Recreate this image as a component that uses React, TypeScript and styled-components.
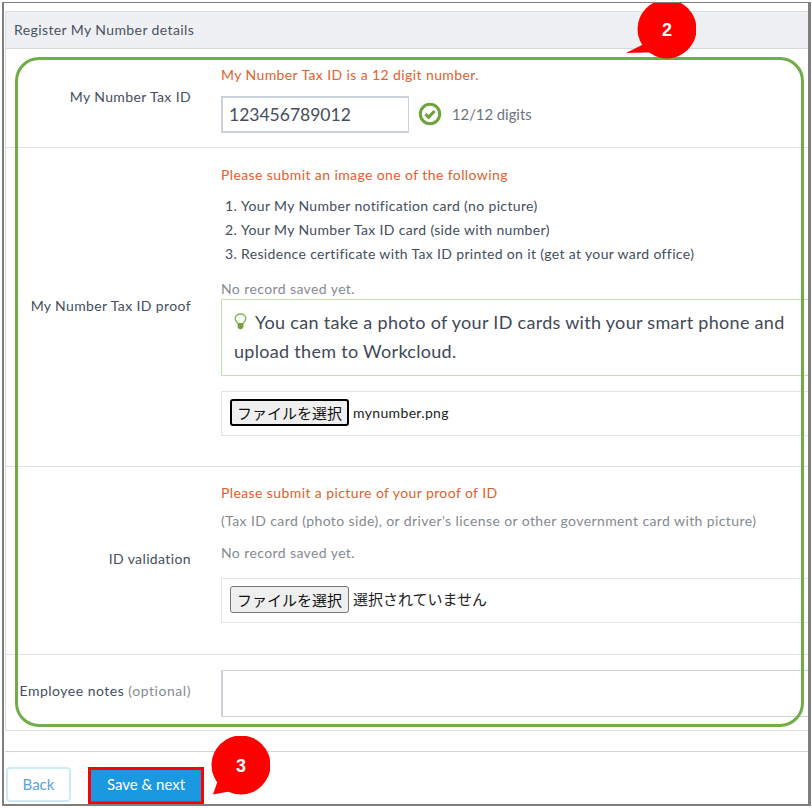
import React from "react";
import styled, { createGlobalStyle } from "styled-components";

const Global = createGlobalStyle`
  html, body { margin: 0; padding: 0; background: #fff; }
  body { font-family: Lato, "Noto Sans CJK JP", sans-serif; color: #414b5a; }
  * { box-sizing: border-box; }
`;
const Page = styled.div`
  width: 812px; height: 808px; padding: 2px 1px 2px 2px; background: #fff;
`;
const Frame = styled.div`
  position: relative; width: 100%; height: 100%; overflow: hidden;
  border: solid #7f7f7f; border-width: 1.5px 3px 2px 2px; padding: 7.5px 0 0 1px; background: #fff;
`;
const Panel = styled.section`
  width: 840px; border: 1px solid #dcdfe3; border-right: 0;
`;
const PanelHeader = styled.header`
  height: 37px; background: #eef0f3; border-bottom: 1px solid #d6d9dd;
  padding: 0 0 0 8px; display: flex; align-items: center; font-size: 14px; letter-spacing: 0.4px; color: #4a5361;
`;
const Row = styled.div<{ $last?: boolean }>`
  display: grid; grid-template-columns: 185px 1fr; column-gap: 30px; align-items: center;
  border-bottom: ${(p) => (p.$last ? "0" : "1px solid #dfe2e5")};
`;
const Label = styled.div`
  text-align: right; font-size: 14px; line-height: 20px; padding-bottom: 2px; color: #444e5c; letter-spacing: 0.38px; white-space: nowrap;
`;
const Optional = styled.span`color: #858b94; letter-spacing: 0.55px;`;
const NotesLabel = styled(Label)`letter-spacing: 0.5px;`;
const Field = styled.div<{ $top: number; $bottom: number }>`
  padding: ${(p) => p.$top}px 0 ${(p) => p.$bottom}px 0; width: 600px;
`;
const Hint = styled.div`
  font-size: 14px; line-height: 20px; color: #e2602c; letter-spacing: 0.4px;
`;
const Muted = styled.div<{ $gap: number }>`
  font-size: 14px; line-height: 20px; color: #858a90; letter-spacing: 0.4px; margin-top: ${(p) => p.$gap}px; white-space: nowrap;
`;
const InputLine = styled.div`
  display: flex; align-items: center; margin-top: 11px;
`;
const TaxInput = styled.div`
  width: 188px; height: 37px; border: 2px solid #ccd2da; border-width: 2px 1px 2px 2px; padding-left: 6px;
  display: flex; align-items: center; font-size: 17.5px; color: #444e5c; background: #fff;
`;
const CheckWrap = styled.span`display: inline-flex; margin-left: 9px;`;
const Digits = styled.span`font-size: 14.8px; color: #6c7480; margin-left: 10px;`;
const Steps = styled.ol`
  margin: 9px 0 0; padding: 0 0 0 20px; font-size: 14px; line-height: 24px; color: #444e5c; letter-spacing: 0.35px;
`;
const Tip = styled.div`
  height: 77px; border: 1px solid #c5e2a8; padding: 8px 12px; font-size: 18px; line-height: 29px; color: #3f4957; background: #fff; letter-spacing: 0.3px;
`;
const TipIcon = styled.span`display: inline-flex; vertical-align: -1px; margin-right: 8px;`;
const FileBox = styled.div<{ $gap: number }>`
  height: 45px; margin-top: ${(p) => p.$gap}px; border: 1px solid #e2e4e7; padding: 0 0 2px 8px; display: flex; align-items: center;
`;
const FileButton = styled.button<{ $focus?: boolean }>`
  width: 119px; height: 27px; padding: 0; margin-right: 4px; background: #efefef; color: #111;
  font-family: "Noto Sans CJK JP", sans-serif; font-size: 15px; line-height: 1; border-radius: 3px;
  border: ${(p) => (p.$focus ? "2px solid #000" : "1px solid #767676")};
`;
const FileName = styled.span<{ $jp?: boolean }>`
  font-size: ${(p) => (p.$jp ? "15px" : "14px")}; color: #222; letter-spacing: ${(p) => (p.$jp ? "0" : "0.35px")};
  padding-bottom: ${(p) => (p.$jp ? "2px" : "0")};
  font-family: ${(p) => (p.$jp ? '"Noto Sans CJK JP", sans-serif' : "Lato, sans-serif")};
`;
const Notes = styled.div`
  height: 47px; width: 600px; border: 2px solid #ccd2da; border-width: 1px 1px 1px 2px; margin: 15px 0 13px;
`;
const Footer = styled.footer`
  margin-top: 20px; border-top: 1px solid #d3d5d8; padding: 15px 0 0 1px; display: flex; align-items: flex-start;
`;
const BackButton = styled.button`
  width: 65px; height: 35px; border: 2px solid #cdeaf8; border-radius: 4px; background: #fff; color: #5aa3dc;
  font-family: Lato, sans-serif; font-size: 15px;
`;
const SaveOutline = styled.div`
  margin-left: 17px; border: 3px solid #f00; height: 38px;
`;
const SaveButton = styled.button`
  width: 110px; height: 32px; padding: 0 0 2px; border: 0; border-bottom: 1px solid #127cb8; background: #1a98e0; color: #fff;
  font-family: Lato, sans-serif; font-size: 15px; display: block;
`;
const GreenOutline = styled.div`
  position: absolute; left: 11px; top: 54px; width: 789px; height: 670px;
  border: 3px solid #70ad47; border-radius: 24px; pointer-events: none;
`;
const Callout = styled.div<{ $x: number; $y: number }>`
  position: absolute; left: ${(p) => p.$x}px; top: ${(p) => p.$y}px; width: 72px; height: 72px;
`;
const CalloutText = styled.span`
  position: absolute; left: 33px; top: 20px; color: #fff; font-family: "Liberation Sans", Arial, sans-serif; font-weight: 700; font-size: 18px;
  line-height: 20px; width: 20px; text-align: center;
`;

const Bubble = ({ tail }: { tail: string }) => (
  <svg width="72" height="72" viewBox="0 0 72 72">
    <circle cx="43" cy="29" r="29.5" fill="#f00" />
    <path d={tail} fill="#f00" />
  </svg>
);

const Check = () => (
  <svg width="24" height="24" viewBox="0 0 24 24">
    <circle cx="12" cy="12" r="9.7" fill="#fff" stroke="#70a33f" strokeWidth="3" />
    <path d="M7.4 12.2 L10.6 15.2 L16.6 9" fill="none" stroke="#70a33f" strokeWidth="3.2" />
  </svg>
);

const Bulb = () => (
  <svg width="13" height="17" viewBox="0 0 13 17">
    <path d="M3.8 10.2 C2.4 8.9 1.2 7.6 1.2 5.6 C1.2 2.9 3.6 1 6.5 1 C9.4 1 11.8 2.9 11.8 5.6 C11.8 7.6 10.6 8.9 9.2 10.2" fill="#fff" stroke="#7fb54d" strokeWidth="1.4" />
    <path d="M3.6 10 H9.4 V14 C9.4 15.4 8 16.2 6.5 16.2 C5 16.2 3.6 15.4 3.6 14 Z" fill="#70a33f" />
  </svg>
);

export default function App() {
  return (
    <Page>
      <Global />
      <Frame>
        <Panel>
          <PanelHeader>Register My Number details</PanelHeader>
          <Row>
            <Label>My Number Tax ID</Label>
            <Field $top={16} $bottom={14}>
              <Hint>My Number Tax ID is a 12 digit number.</Hint>
              <InputLine>
                <TaxInput>123456789012</TaxInput>
                <CheckWrap><Check /></CheckWrap>
                <Digits>12/12 digits</Digits>
              </InputLine>
            </Field>
          </Row>
          <Row>
            <Label>My Number Tax ID proof</Label>
            <Field $top={17} $bottom={30}>
              <Hint>Please submit an image one of the following</Hint>
              <Steps>
                <li>Your My Number notification card (no picture)</li>
                <li>Your My Number Tax ID card (side with number)</li>
                <li>Residence certificate with Tax ID printed on it (get at your ward office)</li>
              </Steps>
              <Muted $gap={13}>No record saved yet.</Muted>
              <Tip>
                <TipIcon><Bulb /></TipIcon>
                You can take a photo of your ID cards with your smart phone and upload them to Workcloud.
              </Tip>
              <FileBox $gap={15}>
                <FileButton $focus>ファイルを選択</FileButton>
                <FileName>mynumber.png</FileName>
              </FileBox>
            </Field>
          </Row>
          <Row>
            <Label>ID validation</Label>
            <Field $top={16} $bottom={31}>
              <Hint>Please submit a picture of your proof of ID</Hint>
              <Muted $gap={8}>(Tax ID card (photo side), or driver's license or other government card with picture)</Muted>
              <Muted $gap={12}>No record saved yet.</Muted>
              <FileBox $gap={15}>
                <FileButton>ファイルを選択</FileButton>
                <FileName $jp>選択されていません</FileName>
              </FileBox>
            </Field>
          </Row>
          <Row $last>
            <NotesLabel>Employee notes <Optional>(optional)</Optional></NotesLabel>
            <Notes />
          </Row>
        </Panel>
        <Footer>
          <BackButton>Back</BackButton>
          <SaveOutline><SaveButton>Save &amp; next</SaveButton></SaveOutline>
        </Footer>
        <GreenOutline />
        <Callout $x={620} $y={-3}>
          <Bubble tail="M2 53 L28 40 L40 52 Z" />
          <CalloutText>2</CalloutText>
        </Callout>
        <Callout $x={194} $y={733}>
          <Bubble tail="M15 58.5 L20 44 L34 55 Z" />
          <CalloutText>3</CalloutText>
        </Callout>
      </Frame>
    </Page>
  );
}
